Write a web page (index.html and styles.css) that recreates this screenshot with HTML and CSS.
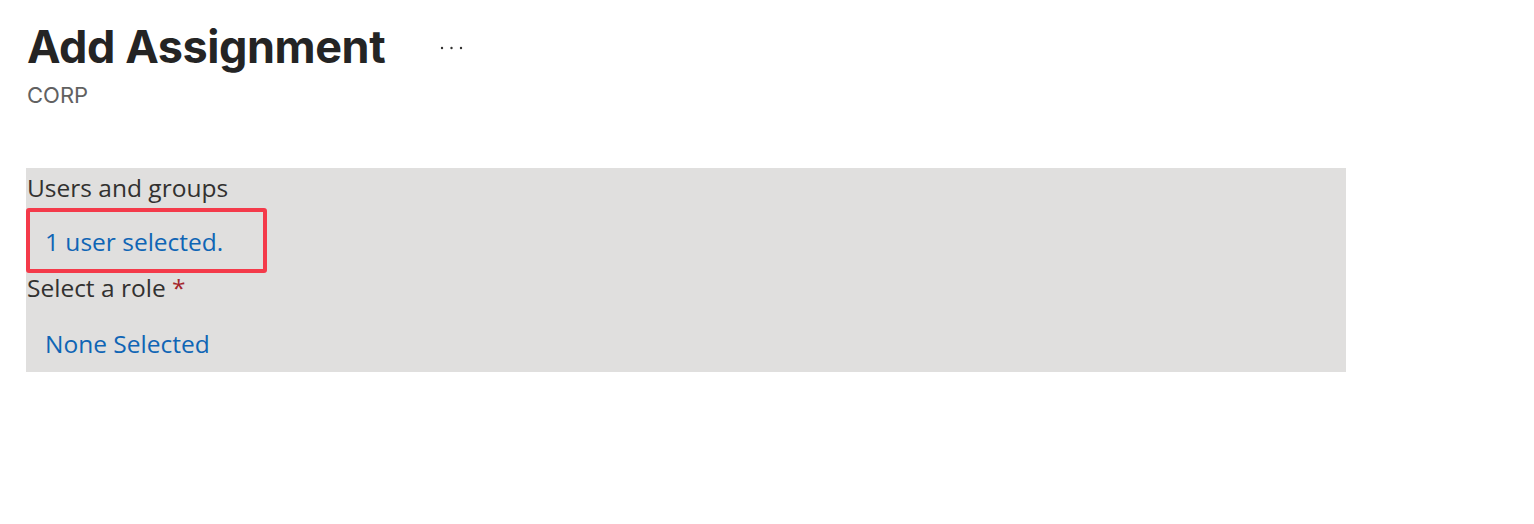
FILE: index.html
```html
<!DOCTYPE html>
<html lang="en">
<head>
  <meta charset="UTF-8">
  <meta name="viewport" content="width=device-width, initial-scale=1.0">
  <title>Add Assignment</title>
  <link rel="stylesheet" href="styles.css">
</head>
<body>

<div class="page">
  <div class="header">
    <div class="title-row">
      <h1>Add Assignment</h1>
      <button class="more" type="button" aria-label="More actions">
        <svg width="24" height="4" viewBox="0 0 24 4">
          <circle cx="2" cy="2" r="1.2" fill="#323130"/>
          <circle cx="11.5" cy="2" r="1.2" fill="#323130"/>
          <circle cx="21" cy="2" r="1.2" fill="#323130"/>
        </svg>
      </button>
    </div>
    <div class="subtitle">CORP</div>
  </div>

  <div class="panel">
    <div class="field-label">Users and groups</div>
    <div class="field-value highlight">
      <a href="#" class="link">1 user selected.</a>
    </div>
    <div class="field-label">Select a role <span class="required">*</span></div>
    <div class="field-value">
      <a href="#" class="link">None Selected</a>
    </div>
  </div>
</div>

</body>
</html>
```

FILE: styles.css
```css
body {
  margin: 0;
  padding: 0;
  background-color: #fff;
  font-family: Inter, 'Liberation Sans', sans-serif;
  color: #242424;
}
.page {
  padding: 19px 0 0 26px;
}
.header {
  padding-left: 1px;
}
.title-row {
  display: flex;
  align-items: center;
  gap: 55px;
}
h1 {
  margin: 0;
  font-size: 45px;
  line-height: 56px;
  font-weight: 700;
  letter-spacing: -0.45px;
}
.more {
  border: none;
  background: none;
  padding: 0;
  margin-top: 1px;
  display: flex;
}
.subtitle {
  margin-top: 6px;
  font-size: 22px;
  line-height: 28px;
  color: #616161;
}
.panel {
  margin-top: 59px;
  width: 1320px;
  height: 204px;
  box-sizing: border-box;
  padding-top: 5px;
  background-color: #e0dfde;
  font-family: 'Open Sans', 'Noto Sans', sans-serif;
  font-size: 24.5px;
  line-height: 30px;
}
.field-label {
  padding-left: 1px;
  color: #323130;
}
.required {
  color: #a4262c;
}
.field-value {
  padding: 26px 0 0 19px;
}
.highlight {
  margin-top: 5px;
  width: 241px;
  height: 65px;
  box-sizing: border-box;
  padding: 15px 0 0 15px;
  border: 4px solid #f43a4a;
  border-radius: 3px;
}
.link {
  color: #0f65b5;
  text-decoration: none;
}
```
